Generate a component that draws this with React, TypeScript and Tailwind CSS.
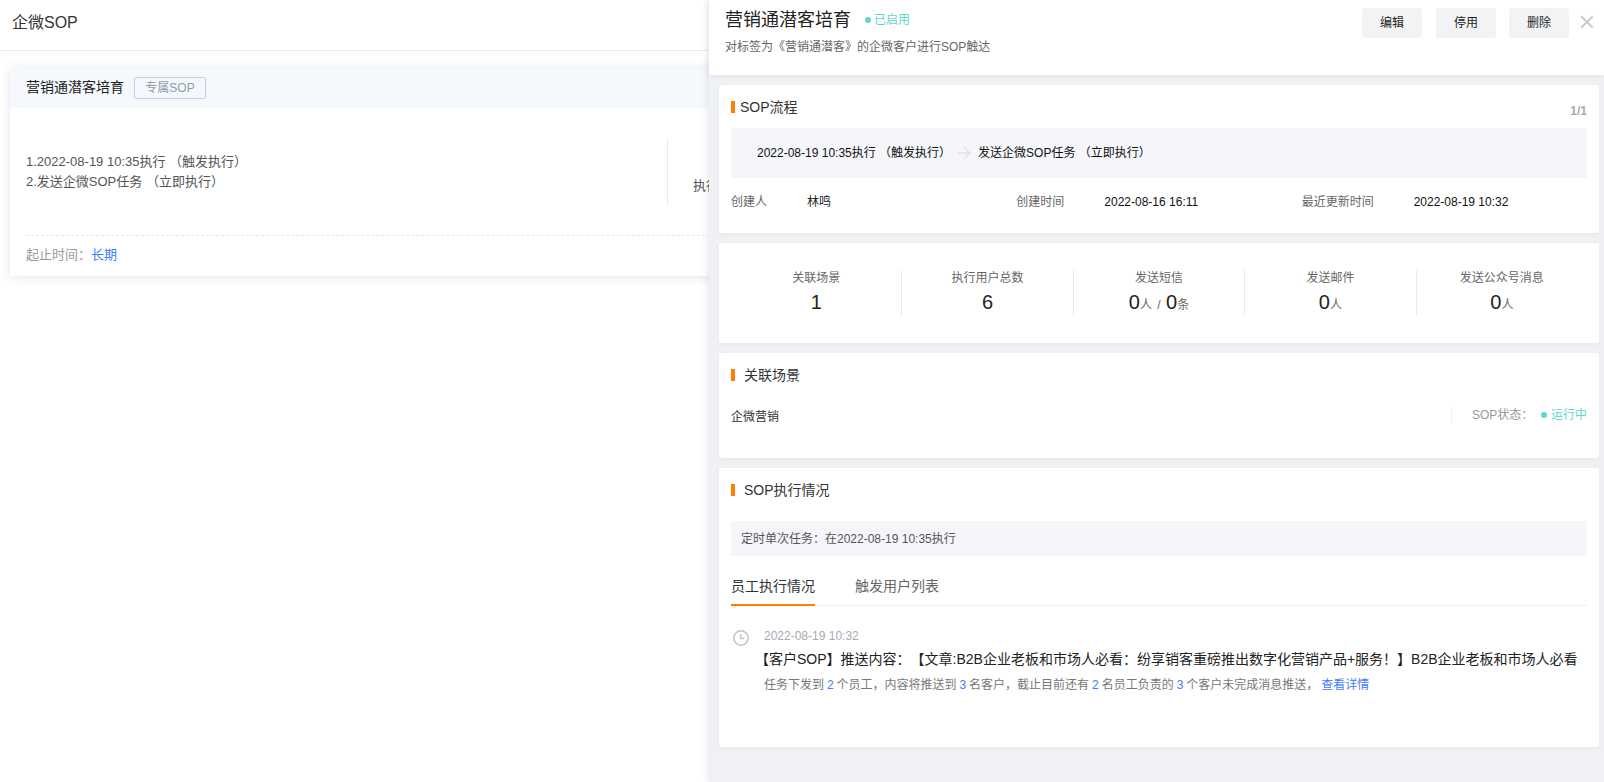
import React from "react";
import { ArrowRight, X } from "lucide-react";

const stats = [
  { label: "关联场景", value: [{ n: "1" }] },
  { label: "执行用户总数", value: [{ n: "6" }] },
  { label: "发送短信", value: [{ n: "0", u: "人" }, { sep: " / " }, { n: "0", u: "条" }] },
  { label: "发送邮件", value: [{ n: "0", u: "人" }] },
  { label: "发送公众号消息", value: [{ n: "0", u: "人" }] },
];

function SectionTitle({ children, className }: { children: React.ReactNode; className: string }) {
  return (
    <div className="flex h-[14px] items-center">
      <span className="h-[12px] w-[4px] bg-[#ff8000]" />
      <span className={`text-[14px] text-[#333] ${className}`}>{children}</span>
    </div>
  );
}

function ClockIcon() {
  return (
    <svg width="16" height="16" viewBox="0 0 16 16" fill="none" stroke="#c0c4cf" strokeWidth="1.5">
      <circle cx="8" cy="8" r="7.2" />
      <path d="M7.6 4.2v4.3h3.6" strokeWidth="1.6" />
    </svg>
  );
}

function Blue({ children }: { children: React.ReactNode }) {
  return <span className="text-[#3d7eff]">{children}</span>;
}

function ListPage() {
  return (
    <div className="h-[782px] overflow-hidden bg-white">
      <div className="flex h-[51px] items-center border-b border-[#e8ebf0] pb-[4px] pl-[12px] text-[16px] text-[#333]">企微SOP</div>
      <div className="ml-[10px] mt-[17px] h-[208px] w-[1000px] bg-white text-[13px] shadow-[0_1px_10px_rgba(60,70,90,0.14)]">
        <div className="flex h-[40px] items-center bg-[#f5f8fd] pb-[1px] pl-[16px]">
          <span className="text-[14px] text-[#222]">营销通潜客培育</span>
          <span className="ml-[10px] flex h-[22px] w-[72px] items-center justify-center rounded-[2px] border border-[#c8d0dc] text-[12px] text-[#8c9bb0]">专属SOP</span>
        </div>
        <div className="flex h-[127px] pl-[16px]">
          <div className="mt-[44px] w-[641px] leading-[20px] text-[#555]">
            <div>1.2022-08-19 10:35执行 （触发执行）</div>
            <div>2.发送企微SOP任务 （立即执行）</div>
          </div>
          <div className="mt-[30px] h-[67px] border-l border-[#e8ebf2] pl-[25px]">
            <div className="mt-[38px] leading-[20px] text-[#555]">执行</div>
          </div>
        </div>
        <div className="ml-[16px] flex h-[41px] items-center border-t border-dashed border-[#e6e8ec] pb-[2px] text-[#999]">
          <span>起止时间：</span>
          <Blue>长期</Blue>
        </div>
      </div>
    </div>
  );
}

function DetailPanel() {
  return (
    <div className="absolute bottom-0 right-0 top-0 w-[895px] bg-[#f0f1f5] shadow-[-2px_0_6px_rgba(60,70,90,0.1)]">
      <div className="flex h-[75px] justify-between bg-white pl-[16px] shadow-[0_1px_6px_rgba(60,70,90,0.08)]">
        <div>
          <div className="mt-[9px] flex h-[22px] items-center">
            <span className="text-[18px] text-[#222]">营销通潜客培育</span>
            <span className="ml-[14px] h-[6px] w-[6px] rounded-full bg-[#5fd6cc]" />
            <span className="ml-[3px] text-[12px] text-[#5fd6cc]">已启用</span>
          </div>
          <div className="mt-[7px] text-[12px] leading-[18px] text-[#666]">对标签为《营销通潜客》的企微客户进行SOP触达</div>
        </div>
        <div className="flex items-start pr-[7px] pt-[8px]">
          <button className="h-[30px] w-[60px] rounded-[3px] bg-[#f2f3f5] text-[12px] text-[#222]">编辑</button>
          <button className="ml-[14px] h-[30px] w-[60px] rounded-[3px] bg-[#f2f3f5] text-[12px] text-[#222]">停用</button>
          <button className="ml-[13px] h-[30px] w-[60px] rounded-[3px] bg-[#f2f3f5] text-[12px] text-[#222]">删除</button>
          <X className="ml-[8px] mt-[4px] h-[20px] w-[20px] text-[#c8cbd2]" strokeWidth={2.6} />
        </div>
      </div>

      <div className="flex flex-col gap-[10px] pl-[10px] pr-[5px] pt-[10px] text-[12px]">
        <div className="h-[148px] rounded-[2px] bg-white px-[12px] pt-[15px] shadow-[0_1px_4px_rgba(60,70,90,0.06)]">
          <div className="flex justify-between">
            <SectionTitle className="ml-[5px]">SOP流程</SectionTitle>
            <span className="mt-[4px] h-[14px] font-bold leading-[14px] text-[#a5a9b3]">1/1</span>
          </div>
          <div className="mt-[10px] flex h-[50px] items-center bg-[#f5f6fa] pl-[26px] text-[#111]">
            <span>2022-08-19 10:35执行 （触发执行）</span>
            <ArrowRight className="ml-[3px] mr-[4px] h-[20px] w-[20px] text-[#e0e1e5]" strokeWidth={1.6} />
            <span>发送企微SOP任务 （立即执行）</span>
          </div>
          <div className="mt-[15px] grid grid-cols-3 leading-[18px]">
            <div className="flex"><span className="w-[76px] text-[#666]">创建人</span><span className="text-[#222]">林鸣</span></div>
            <div className="flex"><span className="w-[88px] text-[#666]">创建时间</span><span className="text-[#111]">2022-08-16 16:11</span></div>
            <div className="flex"><span className="w-[112px] text-[#666]">最近更新时间</span><span className="text-[#111]">2022-08-19 10:32</span></div>
          </div>
        </div>

        <div className="h-[100px] rounded-[2px] bg-white px-[12px] pt-[27px] shadow-[0_1px_4px_rgba(60,70,90,0.06)]">
          <div className="flex">
            {stats.map((s, i) => (
              <div key={s.label} className={`h-[46px] flex-1 text-center ${i < 4 ? "border-r border-[#e8ebf2]" : ""}`}>
                <div className="leading-[16px] text-[#666]">{s.label}</div>
                <div className="mt-[3px] leading-[26px] text-[#222]">
                  {s.value.map((v, j) =>
                    "sep" in v ? (
                      <span key={j} className="whitespace-pre px-[2px] text-[#666]">{v.sep}</span>
                    ) : (
                      <span key={j}>
                        <span className="text-[20px]">{v.n}</span>
                        {v.u && <span className="text-[#666]">{v.u}</span>}
                      </span>
                    )
                  )}
                </div>
              </div>
            ))}
          </div>
        </div>

        <div className="h-[105px] rounded-[2px] bg-white px-[12px] pt-[15px] shadow-[0_1px_4px_rgba(60,70,90,0.06)]">
          <SectionTitle className="ml-[9px]">关联场景</SectionTitle>
          <div className="mt-[24px] flex h-[18px] items-center justify-between">
            <span className="mt-[4px] text-[#333]">企微营销</span>
            <div className="flex h-[18px] items-center border-l border-[#eef0f4] pl-[20px]">
              <span className="w-[69px] text-[#999]">SOP状态：</span>
              <span className="h-[6px] w-[6px] rounded-full bg-[#5fd6cc]" />
              <span className="ml-[4px] text-[#5fd6cc]">运行中</span>
            </div>
          </div>
        </div>

        <div className="h-[279px] overflow-hidden rounded-[2px] bg-white px-[12px] pt-[15px] shadow-[0_1px_4px_rgba(60,70,90,0.06)]">
          <SectionTitle className="ml-[9px]">SOP执行情况</SectionTitle>
          <div className="mt-[24px] flex h-[35px] items-center bg-[#f5f6fa] pl-[10px] text-[#555]">定时单次任务：在2022-08-19 10:35执行</div>
          <div className="mt-[14px] flex h-[36px] border-b border-[#eeeff4] text-[14px]">
            <div className="h-[36px] border-b-2 border-[#ff8000] leading-[32px] text-[#333]">员工执行情况</div>
            <div className="ml-[40px] leading-[32px] text-[#666]">触发用户列表</div>
          </div>
          <div className="mt-[22px] flex pl-[2px]">
            <div className="mt-[2px] w-[31px] shrink-0"><ClockIcon /></div>
            <div className="min-w-0">
              <div className="leading-[16px] text-[#a5a9b3]">2022-08-19 10:32</div>
              <div className="-ml-[9px] mt-[4px] whitespace-nowrap text-[14px] leading-[22px] text-[#222] [text-spacing-trim:space-all]">【客户SOP】推送内容：【文章:B2B企业老板和市场人必看：纷享销客重磅推出数字化营销产品+服务！】B2B企业老板和市场人必看</div>
              <div className="mt-[6px] whitespace-nowrap leading-[18px] text-[#777] [word-spacing:-0.4px]">
                任务下发到 <Blue>2</Blue> 个员工，内容将推送到 <Blue>3</Blue> 名客户，截止目前还有 <Blue>2</Blue> 名员工负责的 <Blue>3</Blue> 个客户未完成消息推送， <Blue>查看详情</Blue>
              </div>
            </div>
          </div>
        </div>
      </div>
    </div>
  );
}

export default function App() {
  return (
    <div className="relative h-[782px] w-[1604px] overflow-hidden [font-family:'Liberation_Sans','Noto_Sans_CJK_SC',sans-serif]">
      <ListPage />
      <DetailPanel />
    </div>
  );
}
